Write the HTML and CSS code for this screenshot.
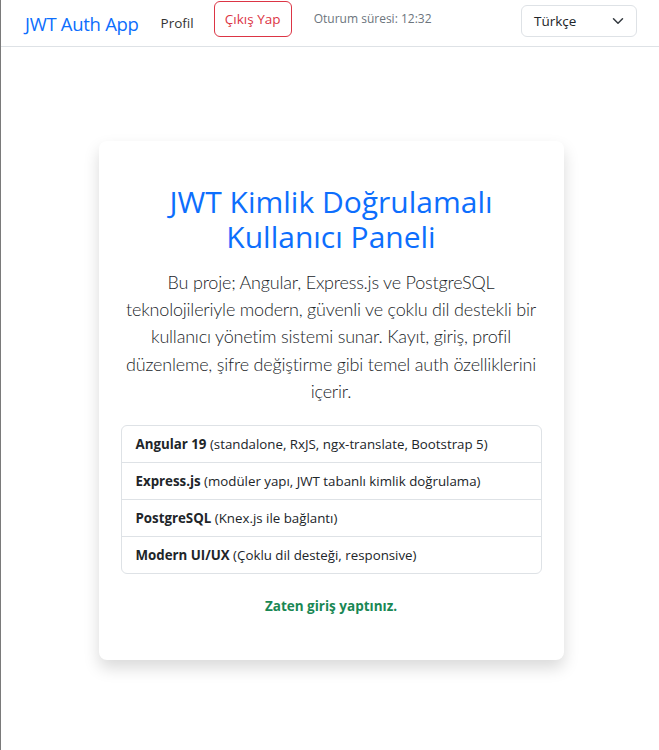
FILE: index.html
```html
<!DOCTYPE html>
<html lang="tr">
<head>
<meta charset="utf-8">
<title>JWT Auth App</title>
<link rel="stylesheet" href="styles.css">
</head>
<body>
<nav class="navbar">
  <a class="brand" href="#">JWT Auth App</a>
  <a class="nav-link" href="#">Profil</a>
  <button class="btn-logout">Çıkış Yap</button>
  <span class="session">Oturum süresi: 12:32</span>
  <div class="lang-select">
    <span>Türkçe</span>
    <svg width="12" height="12" viewBox="0 0 16 16"><path d="M2 5l6 6 6-6" fill="none" stroke="#343a40" stroke-width="2" stroke-linecap="round" stroke-linejoin="round"/></svg>
  </div>
</nav>
<main class="main">
  <section class="card">
    <h1 class="title">JWT Kimlik Doğrulamalı Kullanıcı Paneli</h1>
    <p class="lead">Bu proje; Angular, Express.js ve PostgreSQL teknolojileriyle modern, güvenli ve çoklu dil destekli bir kullanıcı yönetim sistemi sunar. Kayıt, giriş, profil düzenleme, şifre değiştirme gibi temel auth özelliklerini içerir.</p>
    <ul class="list">
      <li><b>Angular 19</b> (standalone, RxJS, ngx-translate, Bootstrap 5)</li>
      <li><b>Express.js</b> (modüler yapı, JWT tabanlı kimlik doğrulama)</li>
      <li><b>PostgreSQL</b> (Knex.js ile bağlantı)</li>
      <li><b>Modern UI/UX</b> (Çoklu dil desteği, responsive)</li>
    </ul>
    <p class="success">Zaten giriş yaptınız.</p>
  </section>
</main>
</body>
</html>
```
FILE: styles.css
```css
html, body { margin: 0; padding: 0; }
body {
  font-family: "Open Sans", "Noto Sans", sans-serif;
  color: #212529;
  background: #fff;
  border-left: 1px solid #7a7a7a;
  min-height: 100vh;
  box-sizing: border-box;
}
.navbar {
  display: flex;
  align-items: center;
  height: 46px;
  border-bottom: 1px solid #dee2e6;
  padding: 0 22px 0 24px;
  box-sizing: content-box;
}
.brand {
  font-size: 18.5px;
  color: #0d6efd;
  text-decoration: none;
  margin-right: 22px;
  letter-spacing: -0.3px;
}
.nav-link {
  font-size: 13.5px;
  color: #333;
  text-decoration: none;
  margin-right: 20px;
}
.btn-logout {
  font-family: inherit;
  font-size: 13.5px;
  color: #dc3545;
  background: #fff;
  border: 1px solid #dc3545;
  border-radius: 6px;
  height: 36px;
  width: 78px;
  padding: 0;
  margin-top: -9px;
  margin-right: 22px;
}
.session {
  font-size: 12px;
  color: #6c757d;
  margin-top: -9px;
}
.lang-select {
  margin-left: auto;
  margin-top: -4px;
  width: 116px;
  height: 32px;
  box-sizing: border-box;
  border: 1px solid #dee2e6;
  border-radius: 6px;
  display: flex;
  align-items: center;
  justify-content: space-between;
  padding: 0 12px 0 12px;
  font-size: 13.5px;
}
.main {
  display: flex;
  align-items: center;
  justify-content: center;
  min-height: calc(100vh - 47px);
  box-sizing: border-box;
  padding: 4px 0 0 2px;
}
.card {
  width: 465px;
  box-sizing: border-box;
  padding: 43px 22px 45px;
  background: #fff;
  border-radius: 8px;
  box-shadow: 0 8px 16px rgba(0,0,0,.15);
  text-align: center;
}
.title {
  margin: 0 0 15px;
  font-size: 30px;
  line-height: 35px;
  font-weight: 400;
  color: #0d6efd;
  padding: 0 30px;
}
.lead {
  margin: 0 0 20px;
  font-family: Lato, "Open Sans", sans-serif;
  font-size: 18px;
  letter-spacing: -0.2px;
  line-height: 27.3px;
  font-weight: 300;
  color: #212529;
}
.list {
  list-style: none;
  margin: 0;
  padding: 0;
  border: 1px solid #dee2e6;
  border-radius: 6px;
  text-align: left;
}
.list li {
  padding: 8px 14px;
  font-size: 13.3px;
  line-height: 20px;
}
.list li + li { border-top: 1px solid #dee2e6; }
.list b { font-weight: 700; }
.success {
  margin: 23px 0 0;
  font-size: 13.5px;
  font-weight: 700;
  color: #198754;
}
```
